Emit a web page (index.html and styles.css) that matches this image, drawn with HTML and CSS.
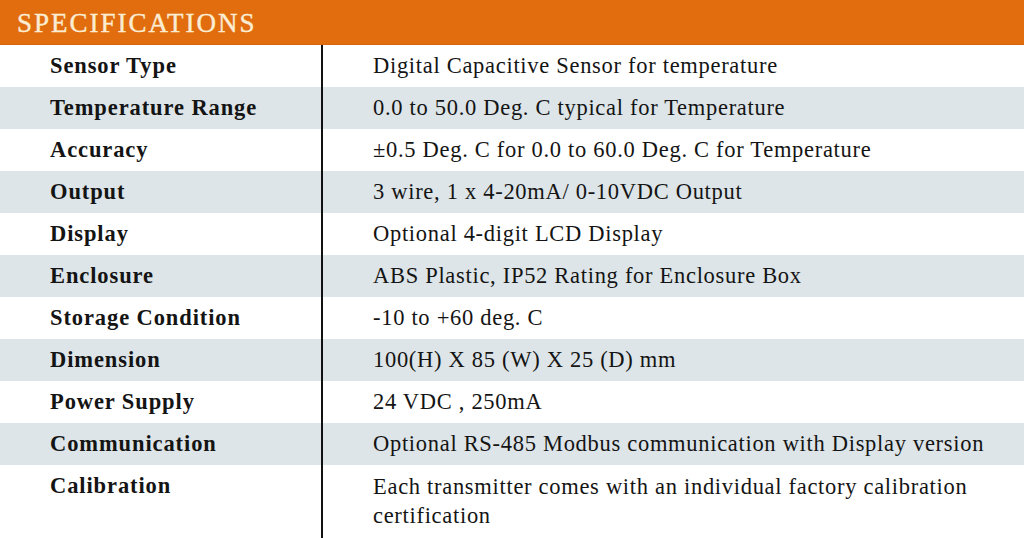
FILE: index.html
```html
<!DOCTYPE html>
<html lang="en">
<head>
<meta charset="utf-8">
<title>Specifications</title>
<link rel="stylesheet" href="styles.css">
</head>
<body>
<div class="specs">
  <div class="specs-head">SPECIFICATIONS</div>
  <div class="specs-table">
    <div class="row"><div class="label">Sensor Type</div><div class="value">Digital Capacitive Sensor for temperature</div></div>
    <div class="row alt"><div class="label">Temperature Range</div><div class="value">0.0 to 50.0 Deg. C typical for Temperature</div></div>
    <div class="row"><div class="label">Accuracy</div><div class="value">±0.5 Deg. C for 0.0 to 60.0 Deg. C for Temperature</div></div>
    <div class="row alt"><div class="label">Output</div><div class="value">3 wire, 1 x 4-20mA/ 0-10VDC Output</div></div>
    <div class="row"><div class="label">Display</div><div class="value">Optional 4-digit LCD Display</div></div>
    <div class="row alt"><div class="label">Enclosure</div><div class="value">ABS Plastic, IP52 Rating for Enclosure Box</div></div>
    <div class="row"><div class="label">Storage Condition</div><div class="value">-10 to +60 deg. C</div></div>
    <div class="row alt"><div class="label">Dimension</div><div class="value">100(H) X 85 (W) X 25 (D) mm</div></div>
    <div class="row"><div class="label">Power Supply</div><div class="value">24 VDC , 250mA</div></div>
    <div class="row alt"><div class="label">Communication</div><div class="value">Optional RS-485 Modbus communication with Display version</div></div>
    <div class="row last"><div class="label">Calibration</div><div class="value">Each transmitter comes with an individual factory calibration certification</div></div>
  </div>
</div>
</body>
</html>
```

FILE: styles.css
```css
html, body {
  margin: 0;
  padding: 0;
  background: #ffffff;
}
body {
  width: 1024px;
  height: 538px;
  overflow: hidden;
  font-family: "Liberation Serif", "DejaVu Serif", serif;
  color: #141414;
}
.specs-head {
  height: 44px;
  background: #e16d0f;
  border-bottom: 1px solid #d5640c;
  color: #fbecd2;
  font-size: 27px;
  letter-spacing: 2px;
  line-height: 46px;
  padding-left: 17px;
  -webkit-text-stroke: 0.4px #fbecd2;
}
.specs-table {
  display: flex;
  flex-direction: column;
}
.row {
  display: grid;
  grid-template-columns: 323px 1fr;
  height: 42px;
  font-size: 22.5px;
}
.row.alt {
  background: #dde5e8;
}
.row.last {
  height: auto;
  min-height: 80px;
}
.label {
  font-weight: bold;
  letter-spacing: 0.9px;
  padding-left: 50px;
  line-height: 42px;
  border-right: 2px solid #111111;
}
.value {
  letter-spacing: 0.7px;
  padding-left: 50px;
  padding-right: 20px;
  line-height: 42px;
}
.row.last .value {
  line-height: 29px;
  padding-top: 7px;
}
```
